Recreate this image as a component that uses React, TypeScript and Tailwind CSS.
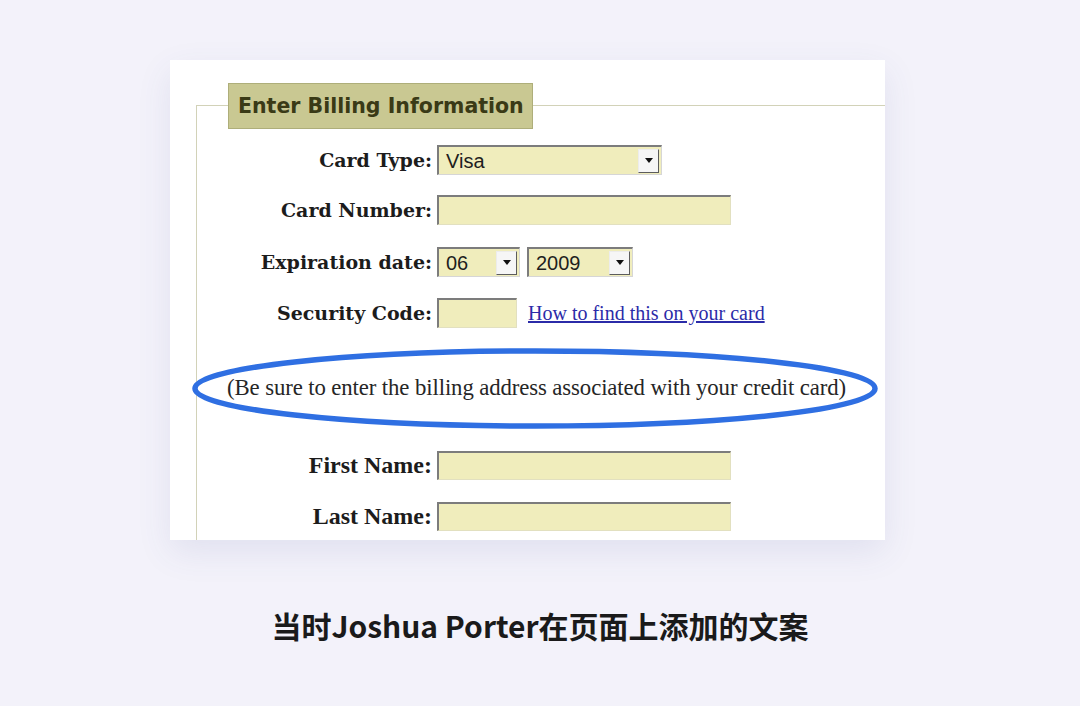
import React from "react";

const serif = { fontFamily: '"DejaVu Serif", Georgia, serif' };
const times = { fontFamily: '"Liberation Serif", "Times New Roman", serif' };
const sans = { fontFamily: '"Liberation Sans", Arial, sans-serif' };

function Arrow() {
  return (
    <div className="flex h-[24px] w-[21px] items-center justify-center border border-t-[#ececec] border-l-[#ececec] border-r-[#5c5c5c] border-b-[#5c5c5c] bg-[#f6f6f6]">
      <svg width="8" height="5" viewBox="0 0 8 5">
        <path d="M0 0 L8 0 L4 5 Z" fill="#111" />
      </svg>
    </div>
  );
}

function Select({ w, value }: { w: string; value: string }) {
  return (
    <div
      className={`${w} flex h-[30px] items-center justify-between border-t-2 border-l-2 border-r border-b border-t-[#7c7c7c] border-l-[#7c7c7c] border-r-[#d6d6d6] border-b-[#d6d6d6] bg-[#f0edbc] pl-[7px] pr-[2px] text-[20px] text-[#1e1e1e]`}
      style={sans}
    >
      <span>{value}</span>
      <Arrow />
    </div>
  );
}

function Input({ w, h = "h-[30px]" }: { w: string; h?: string }) {
  return (
    <div
      className={`${w} ${h} border-t-2 border-l-2 border-r border-b border-t-[#7c7c7c] border-l-[#7c7c7c] border-r-[#e2e0c0] border-b-[#e2e0c0] bg-[#f0edbc]`}
    />
  );
}

function Row({
  label,
  labelClass = "text-[19px]",
  labelFont = serif,
  children,
  className = "",
}: {
  label: string;
  labelClass?: string;
  labelFont?: React.CSSProperties;
  children: React.ReactNode;
  className?: string;
}) {
  return (
    <div className={`flex h-[30px] items-center ${className}`}>
      <div
        className={`w-[240px] pr-[5px] text-right font-bold text-[#1c1c1c] ${labelClass}`}
        style={labelFont}
      >
        {label}
      </div>
      <div className="flex items-center">{children}</div>
    </div>
  );
}

export default function App() {
  return (
    <div className="flex h-[706px] w-[1080px] flex-col bg-[#f3f2fa]">
      <div className="relative ml-[170px] mt-[60px] flex h-[480px] w-[715px] flex-col overflow-hidden bg-white pl-[26px] pt-[45px] shadow-[0_12px_32px_rgba(70,80,150,0.10)]">
        <div className="flex flex-1 flex-col border-l border-t border-[#d2d2b8]">
          <div className="-mt-[23px] ml-[31px] flex h-[46px] w-[305px] items-center whitespace-nowrap border border-[#aeae7a] bg-[#c9c892] px-[9px]">
            <span
              className="text-[20.5px] font-bold text-[#3a3a16]"
              style={{ fontFamily: '"DejaVu Sans", Verdana, sans-serif' }}
            >
              Enter Billing Information
            </span>
          </div>

          <Row label="Card Type:" className="mt-[16px]">
            <Select w="w-[225px]" value="Visa" />
          </Row>
          <Row label="Card Number:" className="mt-[20px]">
            <Input w="w-[294px]" />
          </Row>
          <Row label="Expiration date:" className="mt-[22px]">
            <Select w="w-[83px]" value="06" />
            <div className="w-[7px]" />
            <Select w="w-[106px]" value="2009" />
          </Row>
          <Row label="Security Code:" className="mt-[21px]">
            <Input w="w-[80px]" />
            <a
              href="#"
              className="ml-[11px] text-[20px] text-[#2b2ba8] underline"
              style={times}
            >
              How to find this on your card
            </a>
          </Row>

          <div
            className="mt-[45px] flex h-[30px] items-center whitespace-nowrap pl-[30px] text-[22.75px] tracking-[-0.1px] text-[#262626]"
            style={times}
          >
            (Be sure to enter the billing address associated with your credit card)
          </div>

          <Row
            label="First Name:"
            labelClass="text-[24px]"
            labelFont={times}
            className="mt-[47px]"
          >
            <Input w="w-[294px]" h="h-[29px]" />
          </Row>
          <Row
            label="Last Name:"
            labelClass="text-[24px]"
            labelFont={times}
            className="mt-[21px]"
          >
            <Input w="w-[294px]" h="h-[29px]" />
          </Row>
        </div>

        <svg
          className="absolute left-[22px] top-[288px]"
          width="686"
          height="81"
          viewBox="0 0 686 81"
        >
          <ellipse
            cx="343"
            cy="40.5"
            rx="340"
            ry="37.5"
            fill="none"
            stroke="#2f6fe2"
            strokeWidth="5.5"
          />
        </svg>
      </div>

      <div
        className="mt-[70px] text-center text-[30px] font-bold leading-none text-[#1a1a1a]"
        style={{ fontFamily: '"Noto Sans CJK SC", "Noto Sans", sans-serif' }}
      >
        当时Joshua Porter在页面上添加的文案
      </div>
    </div>
  );
}
